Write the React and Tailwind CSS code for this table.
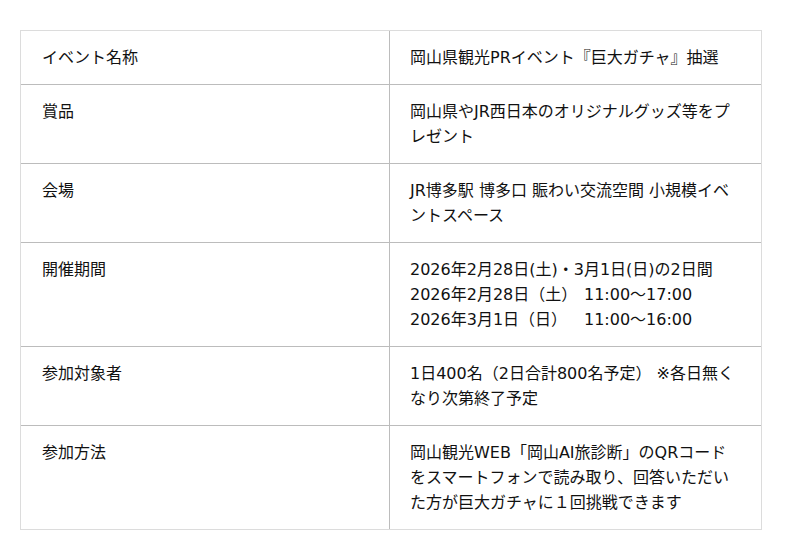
export default function App() {
  const rows = [
    ["イベント名称", ["岡山県観光PRイベント『巨大ガチャ』抽選"]],
    ["賞品", ["岡山県やJR西日本のオリジナルグッズ等をプレゼント"]],
    ["会場", ["JR博多駅 博多口 賑わい交流空間 小規模イベントスペース"]],
    ["開催期間", null],
    ["参加対象者", ["1日400名（2日合計800名予定） ※各日無くなり次第終了予定"]],
    ["参加方法", ["岡山観光WEB「岡山AI旅診断」のQRコードをスマートフォンで読み取り、回答いただいた方が巨大ガチャに１回挑戦できます"]],
  ];
  return (
    <div
      className="w-[800px] h-[560px] bg-white pt-[30px] pl-[20px] text-[#111]"
      style={{ fontFamily: '"DejaVu Sans", "Noto Sans CJK JP", sans-serif' }}
    >
      <div className="w-[742px] border border-[#dcdcdc]">
        {rows.map(([label, lines], i) => (
          <div
            key={i}
            className={`grid grid-cols-[369px_1fr] ${i > 0 ? "border-t border-[#bcbcbc]" : ""}`}
          >
            <div className="px-[21px] py-[14px] text-[16px] leading-[25px] border-r border-[#bcbcbc]">
              {label}
            </div>
            <div className="pl-[20px] pr-[24px] py-[14px] text-[16px] leading-[25px]">
              {lines ? (
                lines.map((l, j) => <div key={j}>{l}</div>)
              ) : (
                <>
                  <div>2026年2月28日(土)・3月1日(日)の2日間</div>
                  <div className="flex">
                    <span className="w-[174px] shrink-0">2026年2月28日（土）</span>
                    <span>11:00〜17:00</span>
                  </div>
                  <div className="flex">
                    <span className="w-[174px] shrink-0">2026年3月1日（日）</span>
                    <span>11:00〜16:00</span>
                  </div>
                </>
              )}
            </div>
          </div>
        ))}
      </div>
    </div>
  );
}
